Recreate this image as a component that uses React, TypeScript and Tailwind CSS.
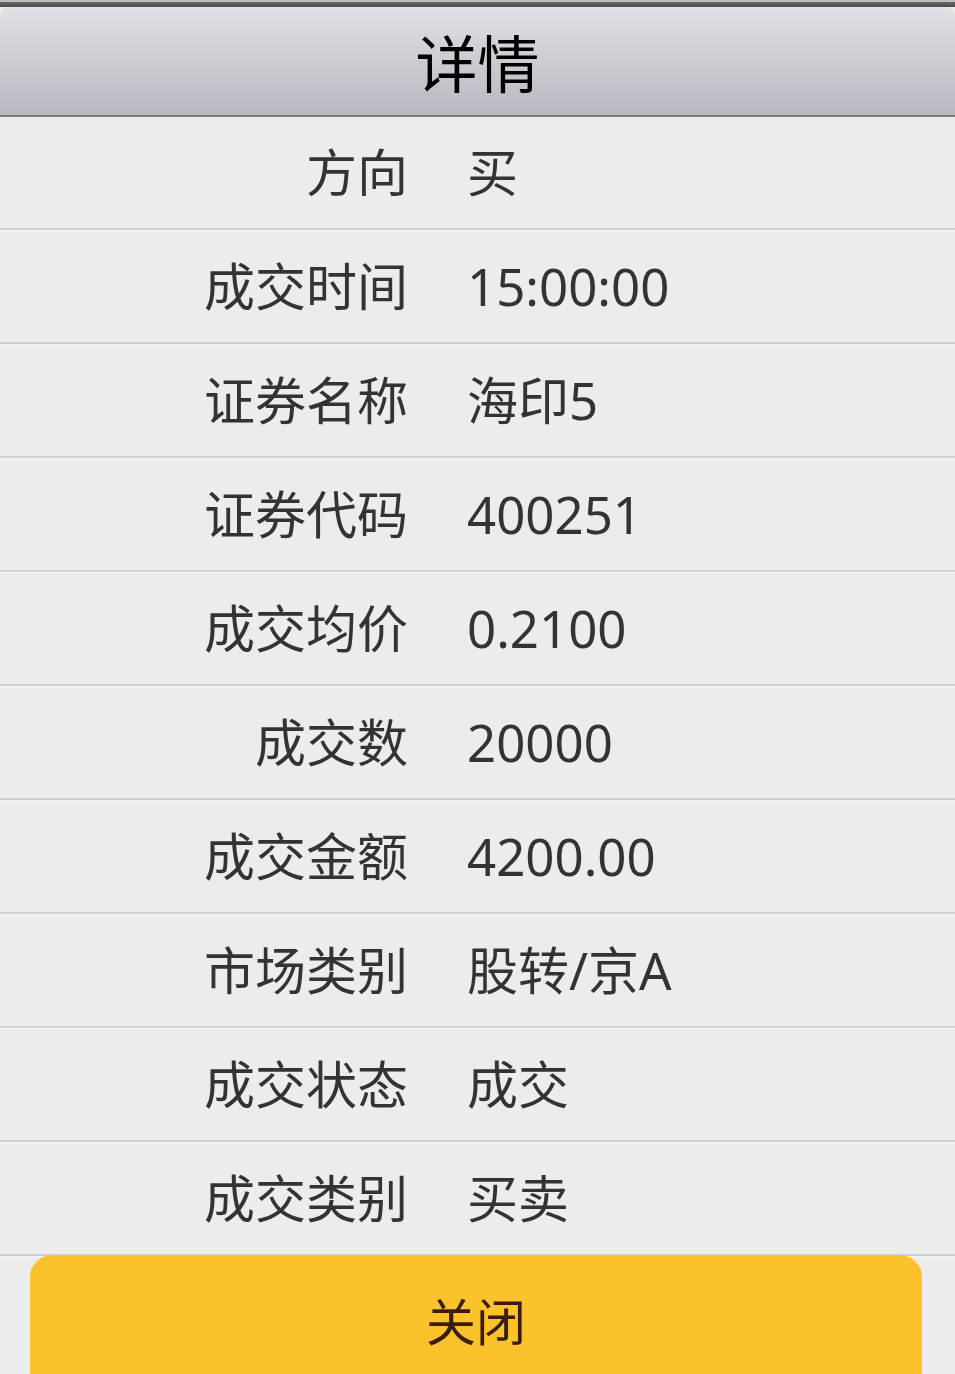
import React from "react";

const rows: [string, string][] = [
  ["方向", "买"],
  ["成交时间", "15:00:00"],
  ["证券名称", "海印5"],
  ["证券代码", "400251"],
  ["成交均价", "0.2100"],
  ["成交数", "20000"],
  ["成交金额", "4200.00"],
  ["市场类别", "股转/京A"],
  ["成交状态", "成交"],
  ["成交类别", "买卖"],
];

export default function App() {
  return (
    <div
      className="w-[955px] h-[1374px] overflow-hidden bg-[#ececec]"
      style={{ fontFamily: '"Noto Sans", "Noto Sans CJK SC", sans-serif' }}
    >
      <div className="h-[2px] bg-[#bdbdbd]" />
      <div className="h-[5px] bg-gradient-to-b from-[#6a6a6a] to-[#4a4a4a]" />
      <div className="h-[108px] rounded-t-[10px] bg-gradient-to-b from-[#e0e1e5] to-[#b6b9c0] flex items-center justify-center">
        <span
          className="text-[62px] leading-none text-black"
          style={{ fontFamily: '"Noto Sans CJK SC", sans-serif' }}
        >
          详情
        </span>
      </div>
      <div className="h-[2px] bg-[#7c7d80]" />
      {rows.map(([k, v]) => (
        <div key={k}>
          <div className="h-[111px] flex items-center text-[51px] leading-none text-[#333333]">
            <div className="w-[408px] text-right">{k}</div>
            <div className="pl-[59px]">{v}</div>
          </div>
          <div className="h-[2px] bg-[#cdd2d9]" />
          <div className="h-[1px] bg-[#f6f6f6]" />
        </div>
      ))}
      <div className="px-[30px] mt-[-2px] w-[952px]">
        <div className="h-[140px] rounded-t-[22px] bg-[#fcc22c] flex justify-center pt-[39px]">
          <span
            className="text-[50px] leading-none text-[#3a1e08]"
            style={{ fontFamily: '"Noto Sans CJK SC", sans-serif' }}
          >
            关闭
          </span>
        </div>
      </div>
    </div>
  );
}
